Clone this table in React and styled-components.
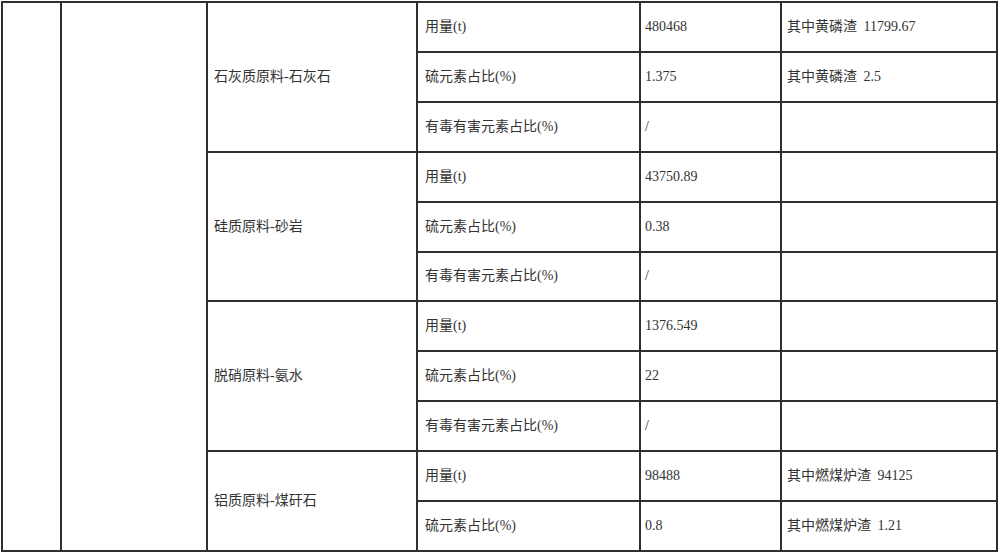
import React from 'react';
import styled, { createGlobalStyle } from 'styled-components';

const GlobalStyle = createGlobalStyle`
  html, body {
    margin: 0;
    padding: 0;
    background: #fff;
  }
`;

const Sheet = styled.div`
  margin: 1px 0 0 1px;
  width: 997px;
  height: 551px;
  box-sizing: border-box;
  padding: 2px;

  display: grid;
  grid-template-columns: 57px 144px 208px 221px 139px 1fr;
  grid-template-rows: repeat(11, 1fr);
  gap: 2px;

  background: #2f2f2f;
  font-family: 'Liberation Serif', 'Noto Sans CJK SC', serif;
  font-size: 14px;
  color: #333;
`;
Sheet.displayName = 'Sheet';

const Cell = styled.div`
  grid-column: ${p => p.$col};
  grid-row: ${p => p.$row} / span ${p => p.$span || 1};

  display: flex;
  align-items: center;
  padding-left: ${p => p.$pad || 5}px;
  min-width: 0;

  background: #fff;
  white-space: nowrap;
  line-height: 20px;
`;
Cell.displayName = 'Cell';

const Line = styled.span`
  display: inline-block;
`;
Line.displayName = 'Line';

const Num = styled.span`
  margin-left: ${p => (p.$gap ? 3 : 0)}px;
`;
Num.displayName = 'Num';

const Unit = styled.span``;
Unit.displayName = 'Unit';

const groups = [
  {
    name: '石灰质原料-石灰石',
    items: [
      ['用量', '(t)', '480468', '其中黄磷渣', '11799.67'],
      ['硫元素占比', '(%)', '1.375', '其中黄磷渣', '2.5'],
      ['有毒有害元素占比', '(%)', '/']
    ]
  },
  {
    name: '硅质原料-砂岩',
    items: [
      ['用量', '(t)', '43750.89'],
      ['硫元素占比', '(%)', '0.38'],
      ['有毒有害元素占比', '(%)', '/']
    ]
  },
  {
    name: '脱硝原料-氨水',
    items: [
      ['用量', '(t)', '1376.549'],
      ['硫元素占比', '(%)', '22'],
      ['有毒有害元素占比', '(%)', '/']
    ]
  },
  {
    name: '铝质原料-煤矸石',
    items: [
      ['用量', '(t)', '98488', '其中燃煤炉渣', '94125'],
      ['硫元素占比', '(%)', '0.8', '其中燃煤炉渣', '1.21']
    ]
  }
];

export default function App() {
  let row = 1;
  const cells = [];
  groups.forEach(g => {
    cells.push(
      <Cell key={g.name} $col={3} $row={row} $span={g.items.length} $pad={6}>
        <Line>{g.name}</Line>
      </Cell>
    );
    g.items.forEach(([label, unit, value, note, noteNum], i) => {
      const r = row + i;
      cells.push(
        <Cell key={`${g.name}-l${i}`} $col={4} $row={r} $pad={7}>
          <Line>
            {label}
            <Unit>{unit}</Unit>
          </Line>
        </Cell>,
        <Cell key={`${g.name}-v${i}`} $col={5} $row={r} $pad={4}>
          <Line>
            <Num>{value}</Num>
          </Line>
        </Cell>,
        <Cell key={`${g.name}-n${i}`} $col={6} $row={r} $pad={5}>
          {note && (
            <Line>
              {note} <Num $gap>{noteNum}</Num>
            </Line>
          )}
        </Cell>
      );
    });
    row += g.items.length;
  });

  return (
    <>
      <GlobalStyle />
      <Sheet>
        <Cell $col={1} $row={1} $span={11} />
        <Cell $col={2} $row={1} $span={11} />
        {cells}
      </Sheet>
    </>
  );
}
